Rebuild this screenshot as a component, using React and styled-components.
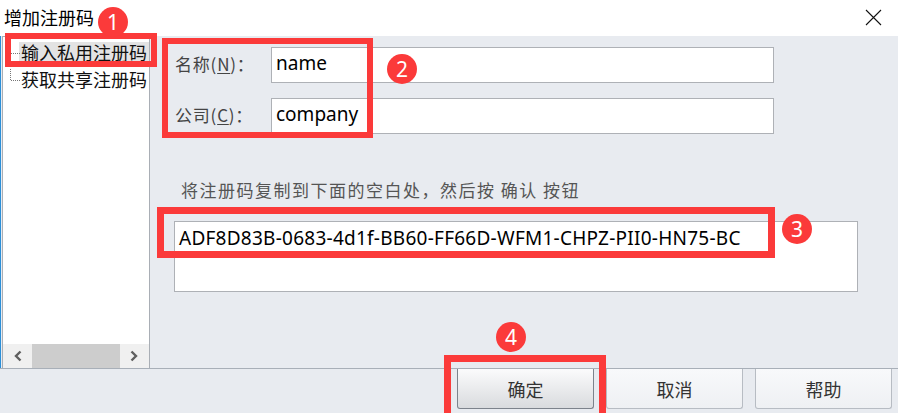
import React from 'react';
import styled, { createGlobalStyle } from 'styled-components';

const GlobalStyle = createGlobalStyle`
    html, body {
        margin: 0;
        padding: 0;
        background: #ffffff;
        overflow: hidden;
    }
    * {
        box-sizing: border-box;
    }
`;

const CJK = `"Noto Sans CJK SC", "Noto Sans", sans-serif`;
const RED = '#fb3a3a';

const Window = styled.div`
    position: relative;
    width: 898px;
    height: 413px;
    display: flex;
    flex-direction: column;
    background: #e8ebf0;
    font-family: ${CJK};
    overflow: hidden;
`;

const TitleBar = styled.div`
    height: 36px;
    flex-shrink: 0;
    background: #ffffff;
    display: flex;
    align-items: center;
    justify-content: space-between;
    padding: 0 16px 2px 4px;
    font-size: 18px;
    color: #000;
`;

const CloseButton = styled.div`
    width: 17px;
    height: 17px;
    display: flex;
`;

const Main = styled.div`
    height: 332px;
    flex-shrink: 0;
    display: flex;
    border-left: 1px solid #2b8fd8;
`;

const TreePanel = styled.div`
    width: 148px;
    margin-left: 1px;
    background: #ffffff;
    border: 1px solid #a9aeb5;
    border-bottom: none;
    display: flex;
    flex-direction: column;
`;

const TreeList = styled.div`
    flex: 1;
    padding-top: 1px;
    position: relative;
`;

const TreeItem = styled.div`
    position: relative;
    height: 27px;
    display: flex;
    align-items: center;
    padding-left: 16px;
    font-size: 18px;
    color: #111;
    white-space: nowrap;

    &::before {
        content: '';
        position: absolute;
        left: 8px;
        top: 15px;
        width: 9px;
        border-top: 1px dotted #777;
    }
    ${props => props.branch && `
        &::after {
            content: '';
            position: absolute;
            left: 7px;
            top: 4px;
            height: 11px;
            border-left: 1px dotted #777;
        }
    `}
`;

const ItemLabel = styled.span`
    padding: 0 2px;
    line-height: 20px;
    background: ${props => props.selected ? '#e3e3e3' : 'transparent'};
`;

const HScroll = styled.div`
    height: 24px;
    background: #f0f0f0;
    display: flex;
    align-items: center;
`;

const ScrollArrow = styled.div`
    width: 30px;
    height: 24px;
    display: flex;
    align-items: center;
    justify-content: center;
`;

const ScrollThumb = styled.div`
    width: 90px;
    height: 24px;
    background: #cdcdcd;
`;

const ScrollTrack = styled.div`
    flex: 1;
`;

const Content = styled.div`
    flex: 1;
    padding: 11px 0 0 25px;
    display: flex;
    flex-direction: column;
`;

const FormRow = styled.div`
    display: flex;
    align-items: center;
    height: 36px;
    margin-bottom: 15px;
`;

const Label = styled.div`
    width: 96px;
    padding-bottom: 4px;
    font-size: 17px;
    color: #444;
    letter-spacing: 0.8px;

    u {
        text-decoration: underline;
        text-underline-offset: 2px;
    }
`;

const TextInput = styled.div`
    width: 503px;
    height: 36px;
    background: #ffffff;
    border: 1px solid #aeb1b6;
    padding: 0 0 4px 4px;
    display: flex;
    align-items: center;
    font-family: "Noto Sans", sans-serif;
    font-size: 19px;
    color: #000;
`;

const Hint = styled.div`
    margin-top: 29px;
    padding-left: 6px;
    line-height: 24px;
    font-size: 17px;
    letter-spacing: 1.5px;
    color: #555;
    white-space: pre;
`;

const CodeArea = styled.div`
    margin-top: 19px;
    margin-left: -1px;
    width: 684px;
    height: 71px;
    background: #ffffff;
    border: 1px solid #aeb1b6;
    padding: 3px 0 0 4px;
    font-family: "Noto Sans", sans-serif;
    font-size: 19px;
    letter-spacing: 0.25px;
    line-height: 26px;
    color: #000;
`;

const Footer = styled.div`
    flex: 1;
    border-top: 1px solid #a8afb8;
    display: flex;
    justify-content: flex-end;
    gap: 12px;
    padding-right: 6px;
`;

const Button = styled.div`
    width: 137px;
    height: 40px;
    border: 1px solid ${props => props.primary ? '#7d838c' : '#b7bcc3'};
    border-top: none;
    border-radius: 0 0 3px 3px;
    background: ${props => props.primary
        ? 'linear-gradient(#fbfbfc, #d9dbde)'
        : 'linear-gradient(#f8f9fb, #eef0f3)'};
    display: flex;
    align-items: center;
    justify-content: center;
    font-size: 18px;
    color: #333;
`;

const Mark = styled.div`
    position: absolute;
    left: ${props => props.x}px;
    top: ${props => props.y}px;
    width: ${props => props.w}px;
    height: ${props => props.h}px;
    border: ${props => props.stroke}px solid ${RED};
    pointer-events: none;
`;

const Badge = styled.div`
    position: absolute;
    left: ${props => props.x - 15}px;
    top: ${props => props.y - 15}px;
    width: 30px;
    height: 30px;
    border-radius: 50%;
    background: ${RED};
    color: #fff;
    font-family: "Noto Sans", sans-serif;
    font-size: 21px;
    display: flex;
    align-items: center;
    justify-content: center;
    line-height: 1;
`;

const Chevron = ({ dir }) => (
    <svg width="10" height="12" viewBox="0 0 10 12">
        <path
            d={dir === 'left' ? 'M7.5 1.5 L3 6 L7.5 10.5' : 'M2.5 1.5 L7 6 L2.5 10.5'}
            fill="none" stroke="#5f5f5f" strokeWidth="2.4"
        />
    </svg>
);

const marks = [
    { x: 5, y: 33, w: 152, h: 34, stroke: 6 },
    { x: 162, y: 38, w: 211, h: 100, stroke: 6 },
    { x: 157, y: 207, w: 618, h: 51, stroke: 7 },
    { x: 444, y: 355, w: 162, h: 70, stroke: 7 },
];

const badges = [
    { n: 1, x: 113, y: 22 },
    { n: 2, x: 402, y: 69 },
    { n: 3, x: 797, y: 229 },
    { n: 4, x: 511, y: 337 },
];

export default function App() {
    return (
        <Window>
            <GlobalStyle />
            <TitleBar>
                <span>增加注册码</span>
                <CloseButton>
                    <svg width="17" height="17" viewBox="0 0 17 17">
                        <path d="M1 1 L16 16 M16 1 L1 16" stroke="#111" strokeWidth="1.1" />
                    </svg>
                </CloseButton>
            </TitleBar>

            <Main>
                <TreePanel>
                    <TreeList>
                        <TreeItem>
                            <ItemLabel selected>输入私用注册码</ItemLabel>
                        </TreeItem>
                        <TreeItem branch>
                            <ItemLabel>获取共享注册码</ItemLabel>
                        </TreeItem>
                    </TreeList>
                    <HScroll>
                        <ScrollArrow><Chevron dir="left" /></ScrollArrow>
                        <ScrollThumb />
                        <ScrollTrack />
                        <ScrollArrow><Chevron dir="right" /></ScrollArrow>
                    </HScroll>
                </TreePanel>

                <Content>
                    <FormRow>
                        <Label>名称(<u>N</u>)：</Label>
                        <TextInput>name</TextInput>
                    </FormRow>
                    <FormRow>
                        <Label>公司(<u>C</u>)：</Label>
                        <TextInput>company</TextInput>
                    </FormRow>
                    <Hint>将注册码复制到下面的空白处，然后按 确认 按钮</Hint>
                    <CodeArea>ADF8D83B-0683-4d1f-BB60-FF66D-WFM1-CHPZ-PII0-HN75-BC</CodeArea>
                </Content>
            </Main>

            <Footer>
                <Button primary>确定</Button>
                <Button>取消</Button>
                <Button>帮助</Button>
            </Footer>

            {marks.map((m, i) => <Mark key={i} {...m} />)}
            {badges.map(b => <Badge key={b.n} x={b.x} y={b.y}>{b.n}</Badge>)}
        </Window>
    );
}
